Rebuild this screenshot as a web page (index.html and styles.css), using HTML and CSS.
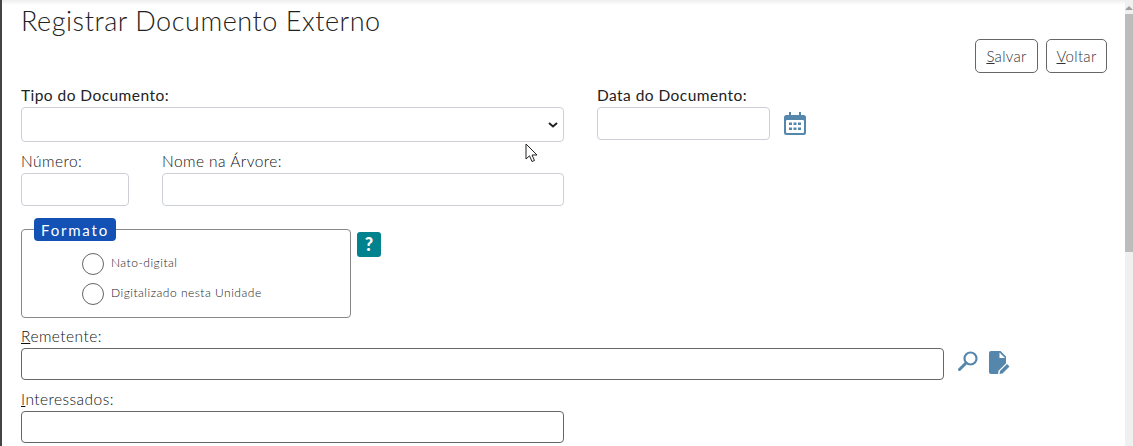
FILE: index.html
```html
<!DOCTYPE html>
<html lang="pt-BR">
<head>
  <meta charset="UTF-8" />
  <title>Registrar Documento Externo</title>
  <link rel="stylesheet" href="styles.css">
</head>
<body>
  <div class="page">
    <main class="content">
      <h1 class="title">Registrar Documento Externo</h1>

      <div class="actions">
        <button class="btn"><u>S</u>alvar</button>
        <button class="btn"><u>V</u>oltar</button>
      </div>

      <form class="docForm">
        <div class="row rowTop">
          <div class="field fieldTipo">
            <label class="lbl lblStrong">Tipo do Documento:</label>
            <div class="selectBox">
              <select class="inp inpSelect"><option></option></select>
              <svg class="selectSeta" viewBox="0 0 10 6" width="10" height="6">
                <path d="M1 1l4 3.500L9 1" fill="none" stroke="#222" stroke-width="2"/>
              </svg>
            </div>
          </div>
          <div class="field fieldData">
            <label class="lbl lblStrong">Data do Documento:</label>
            <div class="withIcon">
              <input class="inp inpData" type="text" />
              <svg class="icoCal" viewBox="0 0 22 23" width="22" height="23">
                <path fill="#5586ab" d="M5 0h2v3h8V0h2v3h2.5A2.5 2.5 0 0 1 22 5.5v15a2.5 2.5 0 0 1-2.5 2.5h-17A2.5 2.5 0 0 1 0 20.500v-15A2.500 2.500 0 0 1 2.500 3H5z"/>
                <rect x="2" y="8" width="18" height="13" rx="1" fill="#fff"/>
                <path fill="#5586ab" d="M5 10.500h3v2.500H5zM9.500 10.500h3v2.500h-3zM14 10.500h3v2.500h-3zM5 15.500h3V18H5zM9.500 15.500h3V18h-3zM14 15.500h3V18h-3z"/>
              </svg>
            </div>
          </div>
        </div>

        <div class="row rowNum">
          <div class="field fieldNum">
            <label class="lbl">Número:</label>
            <input class="inp inpShort" type="text" />
          </div>
          <div class="field fieldNome">
            <label class="lbl">Nome na Árvore:</label>
            <input class="inp inpShort" type="text" />
          </div>
        </div>

        <div class="row rowFormato">
          <fieldset class="formato">
            <legend class="formatoTit">Formato</legend>
            <label class="opcao"><span class="radio"></span>Nato-digital</label>
            <label class="opcao"><span class="radio"></span>Digitalizado nesta Unidade</label>
          </fieldset>
          <span class="ajuda">?</span>
        </div>

        <div class="field fieldRem">
          <label class="lbl"><u>R</u>emetente:</label>
          <div class="withIcon">
            <input class="inp inpDark inpRem" type="text" />
            <svg class="icoBusca" viewBox="0 0 20 20" width="20" height="20">
              <circle cx="12.500" cy="7.500" r="6" fill="none" stroke="#5586ab" stroke-width="2.200"/>
              <path d="M8 12 L1.500 18.500" stroke="#5586ab" stroke-width="3" stroke-linecap="round"/>
            </svg>
            <svg class="icoDoc" viewBox="0 0 21 23" width="21" height="23">
              <path fill="#5586ab" d="M2 0h9.500L17 5.500v6.700L9.500 19.700 9 23H2a2 2 0 0 1-2-2V2a2 2 0 0 1 2-2z"/>
              <path fill="#fff" d="M10.500 1.500V7h5.500z"/>
              <path fill="#5586ab" d="M11 20 18 13l2.500 2.500-7 7-3 .5z"/>
            </svg>
          </div>
        </div>

        <div class="field fieldInt">
          <label class="lbl"><u>I</u>nteressados:</label>
          <input class="inp inpDark inpInt" type="text" />
        </div>
      </form>
    </main>

    <div class="scroll">
      <div class="scrollUp"></div>
      <div class="scrollThumb"></div>
    </div>
  </div>

  <svg class="cursor" viewBox="0 0 14 20" width="14" height="20">
    <path d="M1 1v15l3.500-3.200L7 18.500l2.500-1L7 12h5z" fill="#fff" stroke="#222" stroke-width="1"/>
  </svg>
</body>
</html>
```

FILE: styles.css
```css
* {
  box-sizing: border-box;
}
html, body {
  margin: 0;
  height: 446px;
  overflow: hidden;
}
body {
  font-family: 'Lato', 'Open Sans', sans-serif;
  background: #fff;
  color: #333;
  position: relative;
}
.page {
  display: flex;
  height: 446px;
  background: linear-gradient(#eeeeee, #fff 5px);
}
.content {
  flex: 1;
  border-left: 2px solid #444;
  padding: 6px 18px 0 19px;
}
.title {
  margin: 0;
  font-size: 27px;
  line-height: 30px;
  font-weight: 300;
  color: #222;
  letter-spacing: 0.55px;
}
.actions {
  display: flex;
  justify-content: flex-end;
  gap: 8px;
  margin-top: 3px;
  height: 34px;
}
.btn {
  font: 300 15px 'Lato', sans-serif;
  letter-spacing: 0.3px;
  color: #333;
  background: #fff;
  border: 1px solid #666;
  border-radius: 5px;
  width: 63px;
  padding: 0;
}
.btn + .btn {
  width: 61px;
}
.docForm {
  display: flex;
  flex-direction: column;
}
.row {
  display: flex;
}
.field {
  display: flex;
  flex-direction: column;
}
.lbl {
  font-size: 15.5px;
  line-height: 18px;
  font-weight: 300;
  color: #111;
  letter-spacing: 0.45px;
}
.lblStrong {
  font-weight: 400;
  color: #222;
}
.inp {
  border: 1px solid #ccd0d6;
  border-radius: 4px;
  background: #fff;
  padding: 0 6px;
}
.inpDark {
  border-color: #666;
}
.rowTop {
  margin-top: 13px;
  height: 66px;
}
.fieldTipo {
  width: 543px;
}
.selectBox {
  position: relative;
  margin-top: 3px;
}
.inpSelect {
  display: block;
  height: 35px;
  width: 100%;
  appearance: none;
}
.selectSeta {
  position: absolute;
  right: 6px;
  top: 15px;
}
.fieldData {
  margin-left: 33px;
}
.withIcon {
  display: flex;
  align-items: flex-start;
  margin-top: 3px;
}
.inpData {
  width: 173px;
  height: 33px;
}
.icoCal {
  margin: 5px 0 0 14px;
}
.rowNum {
  gap: 33px;
}
.fieldNum {
  width: 108px;
}
.fieldNome {
  width: 402px;
}
.rowNum .lbl {
  height: 19px;
}
.rowNum .field .inp {
  margin-top: 2px;
}
.inpShort {
  width: 100%;
  height: 33px;
}
.rowFormato {
  align-items: flex-start;
  margin-top: 12px;
}
.formato {
  position: relative;
  width: 330px;
  height: 89px;
  margin: 11px 0 0;
  padding: 23px 0 0 60px;
  border: 1px solid #888;
  border-radius: 4px;
}
.formatoTit {
  position: absolute;
  top: -12px;
  left: 12px;
  width: 82px;
  height: 23px;
  padding: 0;
  text-align: center;
  background: #1351b4;
  color: #fff;
  border-radius: 4px;
  font-size: 15px;
  line-height: 24px;
  letter-spacing: 1.8px;
  font-weight: 400;
}
.opcao {
  display: flex;
  align-items: flex-start;
  height: 22px;
  margin-bottom: 8px;
  font-size: 12px;
  line-height: 20px;
  font-weight: 300;
  color: #222;
  letter-spacing: 0.5px;
}
.radio {
  width: 22px;
  height: 22px;
  margin-right: 7px;
  border: 1px solid #666;
  border-radius: 50%;
  background: #fff;
}
.ajuda {
  width: 24px;
  height: 25px;
  margin: 14px 0 0 6px;
  background: #00838f;
  color: #fff;
  border-radius: 3px;
  text-align: center;
  font-weight: 900;
  font-size: 18px;
  line-height: 25px;
}
.fieldRem {
  margin-top: 10px;
}
.fieldRem .lbl {
  margin-top: -1px;
}
.inpRem {
  width: 923px;
  height: 32px;
}
.fieldRem .withIcon {
  margin-top: 3px;
}
.icoBusca {
  margin: 3px 0 0 14px;
}
.icoDoc {
  margin: 3px 0 0 11px;
}
.fieldInt {
  margin-top: 10px;
}
.inpInt {
  width: 543px;
  height: 32px;
  margin-top: 3px;
}
.scroll {
  width: 8px;
  background: #f0f0f0;
  flex-shrink: 0;
  padding-top: 14px;
  position: relative;
}
.scrollUp {
  position: absolute;
  top: 6px;
  right: 0;
  border-left: 4px solid transparent;
  border-right: 4px solid transparent;
  border-bottom: 4px solid #a0a0a0;
}
.scrollThumb {
  height: 238px;
  background: #bcbcbc;
}
.cursor {
  position: absolute;
  left: 525px;
  top: 143px;
}
```
